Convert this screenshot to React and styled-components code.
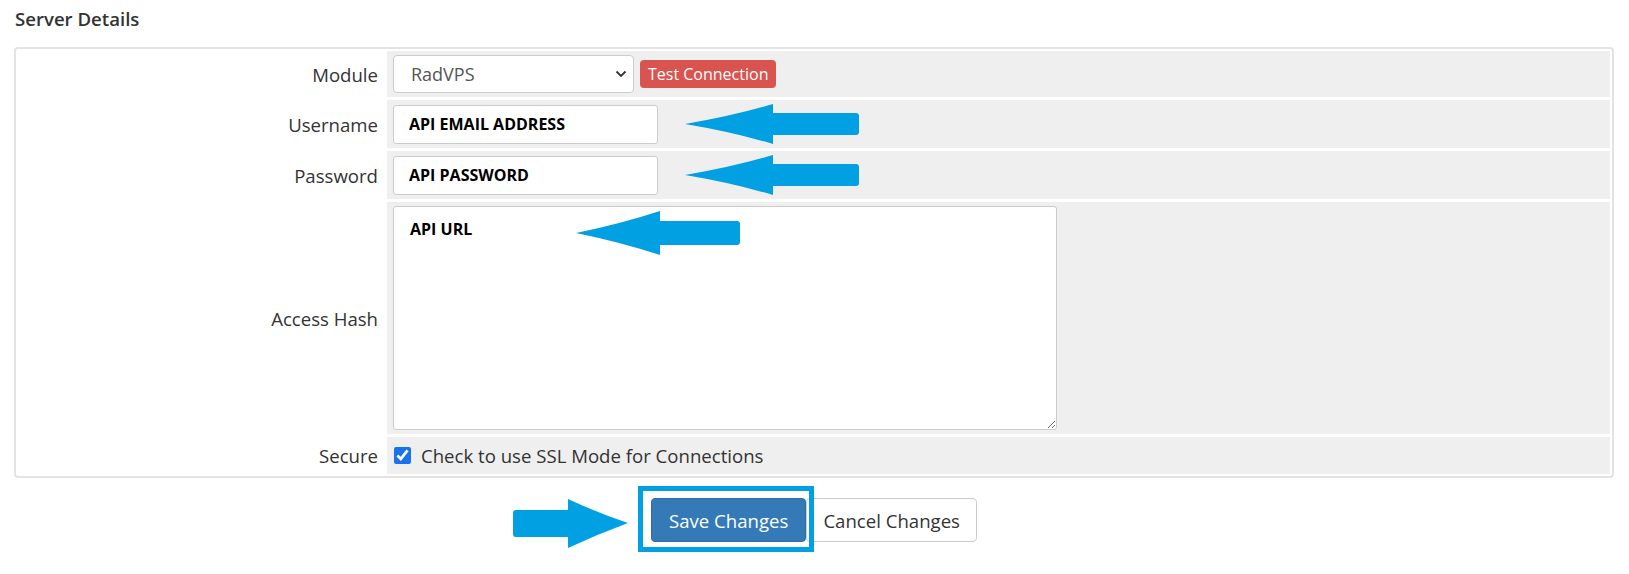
import React from 'react';
import styled, { createGlobalStyle } from 'styled-components';

const GlobalStyle = createGlobalStyle`
  body {
    margin: 0;
    background: #fff;
    font-family: "Open Sans", "Liberation Sans", sans-serif;
    color: #333;
  }
`;

const Page = styled.div`
  box-sizing: border-box;
  min-height: 100vh;
  padding: 7px 15px 20px 14px;
`;

const Heading = styled.h3`
  margin: 0 0 16px 1px;
  font-size: 18.6px;
  line-height: 24px;
  font-weight: 600;
  color: #333;
`;

const Panel = styled.div`
  border: 2px solid #e3e3e3;
  border-radius: 4px;
  padding: 2px;
`;

const FormGrid = styled.div`
  display: grid;
  grid-template-columns: 366px 1fr;
  gap: 3px;
`;

const Label = styled.div`
  display: flex;
  align-items: center;
  justify-content: flex-end;
  padding-right: 6px;
  font-size: 18.6px;
  color: #333;
  background: #fff;
`;

const Field = styled.div`
  box-sizing: border-box;
  display: flex;
  align-items: center;
  gap: ${p => p.$gap || 0}px;
  min-height: ${p => p.$min || 0}px;
  padding: 4px 6px;
  background: #efefef;
`;

const SelectWrap = styled.div`
  position: relative;
  width: 241px;
  height: 38px;
`;

const Select = styled.select`
  appearance: none;
  width: 100%;
  height: 100%;
  padding: 0 30px 0 17px;
  border: 1px solid #ccc;
  border-radius: 4px;
  background: #fff;
  font-family: inherit;
  font-size: 18px;
  color: #555;
`;

const Chevron = styled.svg`
  position: absolute;
  right: 7px;
  top: 15px;
  pointer-events: none;
`;

const DangerButton = styled.button`
  height: 28px;
  padding: 0 8px;
  border: 0;
  border-radius: 4px;
  background: #d9534f;
  color: #fff;
  font-family: inherit;
  font-size: 16px;
`;

const TextInput = styled.input`
  box-sizing: border-box;
  width: 265px;
  height: 39px;
  padding: 0 15px;
  border: 1px solid #ccc;
  border-radius: 3px;
  background: #fff;
  font-family: inherit;
  font-size: 16px;
  font-weight: 700;
  color: #000;
`;

const AreaWrap = styled.div`
  position: relative;
`;

const TextArea = styled.textarea`
  display: block;
  box-sizing: border-box;
  width: 664px;
  height: 224px;
  padding: 11px 16px;
  border: 1px solid #ccc;
  border-radius: 3px;
  background: #fff;
  font-family: inherit;
  font-size: 16px;
  font-weight: 700;
  color: #000;
`;

const Check = styled.label`
  display: flex;
  align-items: center;
  gap: 10px;
  font-size: 18.6px;
  color: #333;

  input {
    width: 17px;
    height: 17px;
    margin: 0 0 0 1px;
    accent-color: #1a73e8;
  }
`;

const Arrow = styled.svg`
  flex: none;
  margin-left: ${p => p.$ml || 0}px;
  fill: #00a0e3;
`;

const OverArrow = styled(Arrow)`
  position: absolute;
  left: ${p => p.$left}px;
  top: ${p => p.$top}px;
`;

const Actions = styled.div`
  display: flex;
  justify-content: center;
  margin-top: 20px;
`;

const Highlight = styled.div`
  position: relative;
  display: flex;

  &::before {
    content: "";
    position: absolute;
    left: -13px;
    right: -8px;
    top: -12px;
    bottom: -10px;
    border: 5px solid #00a0e3;
    pointer-events: none;
  }
`;

const SaveArrow = styled(Arrow)`
  position: absolute;
  right: calc(100% + 23px);
  top: 1px;
`;

const Button = styled.button`
  height: 44px;
  padding: 0 ${p => (p.$primary ? 17 : 16)}px;
  border: 1px solid ${p => (p.$primary ? '#2e6da4' : '#ccc')};
  border-radius: 4px;
  background: ${p => (p.$primary ? '#337ab7' : '#fff')};
  color: ${p => (p.$primary ? '#fff' : '#333')};
  font-family: inherit;
  font-size: 18.6px;
`;

const LeftArrow = ({ ml }) => (
  <Arrow $ml={ml} width="174" height="40" viewBox="0 0 174 40">
    <path d="M0 20 Q48 12 88 0 L88 9 L171 9 Q174 9 174 12 L174 28 Q174 31 171 31 L88 31 L88 40 Q48 28 0 20 Z" />
  </Arrow>
);

export default function App() {
  return (
    <>
      <GlobalStyle />
      <Page>
        <Heading>Server Details</Heading>
        <Panel>
          <FormGrid>
            <Label>Module</Label>
            <Field $gap={6}>
              <SelectWrap>
                <Select defaultValue="RadVPS">
                  <option>RadVPS</option>
                </Select>
                <Chevron width="12" height="8" viewBox="0 0 12 8">
                  <path d="M1.5 1.5 L6 6 L10.5 1.5" fill="none" stroke="#333" strokeWidth="1.8" />
                </Chevron>
              </SelectWrap>
              <DangerButton>Test Connection</DangerButton>
            </Field>

            <Label>Username</Label>
            <Field>
              <TextInput defaultValue="API EMAIL ADDRESS" />
              <LeftArrow ml={27} />
            </Field>

            <Label>Password</Label>
            <Field>
              <TextInput defaultValue="API PASSWORD" />
              <LeftArrow ml={27} />
            </Field>

            <Label>Access Hash</Label>
            <Field>
              <AreaWrap>
                <TextArea defaultValue="API URL" />
                <OverArrow $left={183} $top={5} width="164" height="44" viewBox="0 0 164 44">
                  <path d="M0 22 Q44 13 84 0 L84 10 L161 10 Q164 10 164 13 L164 31 Q164 34 161 34 L84 34 L84 44 Q44 31 0 22 Z" />
                </OverArrow>
              </AreaWrap>
            </Field>

            <Label>Secure</Label>
            <Field $min={37}>
              <Check>
                <input type="checkbox" defaultChecked />
                Check to use SSL Mode for Connections
              </Check>
            </Field>
          </FormGrid>
        </Panel>

        <Actions>
          <Highlight>
            <SaveArrow width="115" height="49" viewBox="0 0 115 49">
              <path d="M0 14 Q0 11 3 11 L55 11 L55 0 Q85 14 115 24 Q85 35 55 49 L55 38 L3 38 Q0 38 0 35 Z" />
            </SaveArrow>
            <Button $primary>Save Changes</Button>
          </Highlight>
          <Button>Cancel Changes</Button>
        </Actions>
      </Page>
    </>
  );
}
